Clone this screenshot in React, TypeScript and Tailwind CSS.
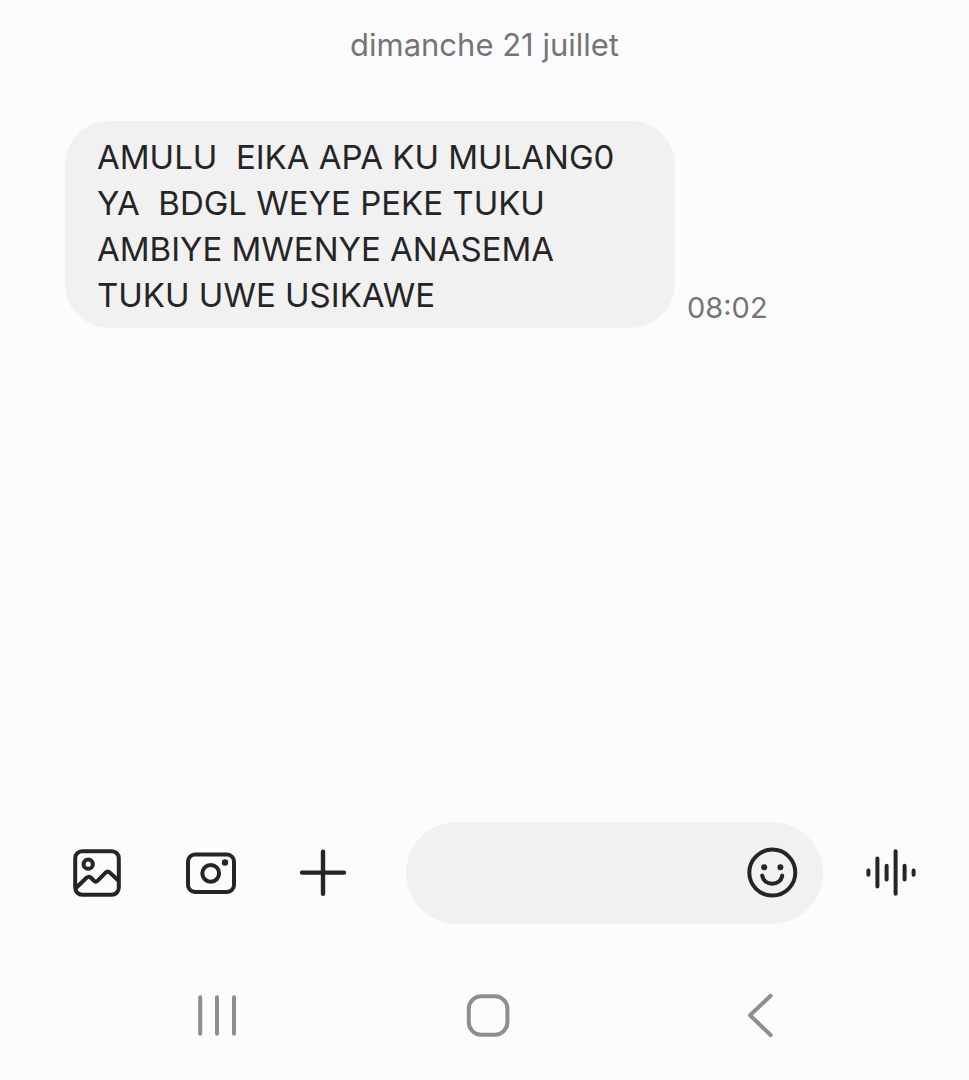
import type { ButtonHTMLAttributes, ReactNode } from 'react';

interface Message {
  id: number;
  text: string;
  time: string;
}

const messages: Message[] = [
  {
    id: 1,
    text: 'AMULU  EIKA APA KU MULANG0\nYA  BDGL WEYE PEKE TUKU\nAMBIYE MWENYE ANASEMA\nTUKU UWE USIKAWE',
    time: '08:02',
  },
];

interface IconButtonProps extends ButtonHTMLAttributes<HTMLButtonElement> {
  label: string;
  children: ReactNode;
}

function IconButton({ label, children, ...props }: IconButtonProps) {
  return (
    <button type="button" aria-label={label} className="size-[52px] shrink-0 cursor-pointer" {...props}>
      <svg
        viewBox="0 0 52 52"
        className="size-full"
        fill="none"
        stroke="currentColor"
        strokeWidth="4"
        strokeLinecap="round"
        strokeLinejoin="round"
        aria-hidden="true"
      >
        {children}
      </svg>
    </button>
  );
}

function MessageBubble({ message }: { message: Message }) {
  return (
    <li className="flex items-end gap-3">
      <p className="w-full max-w-[610px] whitespace-pre-wrap rounded-[44px] bg-[#f1f1f1] px-8 pt-[13px] pb-[10px] text-[33px] leading-[46px] text-[#252525]">
        {message.text}
      </p>
      <time className="text-[29px] leading-10 text-[#757575]">{message.time}</time>
    </li>
  );
}

function Composer() {
  return (
    <form className="flex items-center pr-[52px] pl-[71px] text-[#252525]">
      <div className="mr-[57px] flex gap-[61px]">
        <IconButton label="Galerie">
          <rect x="4.2" y="4.2" width="43.6" height="43.6" rx="7" />
          <circle cx="17.2" cy="17.2" r="4.6" />
          <path d="M5 41 L15.5 30.8 Q18 28.6 20.3 31 L22.8 33.6 Q24.8 35.6 27 33.4 L34.6 25.6 Q36.8 23.6 39 25.7 L47 33.2" />
        </IconButton>
        <IconButton label="Appareil photo">
          <rect x="4" y="7.6" width="46" height="37.4" rx="7" />
          <circle cx="26.7" cy="26.3" r="8.4" />
          <circle cx="41" cy="15.5" r="3.2" fill="currentColor" stroke="none" />
        </IconButton>
        <IconButton label="Ajouter">
          <path d="M5 25.6 H47 M26 4.6 V46.8" strokeWidth="4.4" />
        </IconButton>
      </div>

      <div className="flex h-[102px] min-w-0 flex-1 items-center rounded-full bg-[#f1f1f1] pr-[25px] pl-10">
        <input
          type="text"
          aria-label="Message"
          className="h-full min-w-0 flex-1 bg-transparent text-[33px] outline-none"
        />
        <IconButton label="Emoji">
          <circle cx="26.3" cy="25.6" r="23" />
          <circle cx="18.2" cy="20.3" r="3" fill="currentColor" stroke="none" />
          <circle cx="34.4" cy="20.3" r="3" fill="currentColor" stroke="none" />
          <path d="M16.2 28.6 C18 39.4 34.4 39.4 36.2 28.6" />
        </IconButton>
      </div>

      <div className="ml-[42px] flex">
        <IconButton label="Message vocal">
          <path d="M3.4 23.4 V27.8 M12.4 11.6 V39.6 M21.6 18.8 V32.4 M30.6 4.2 V46.8 M39.6 18.8 V32.4 M48.6 23.4 V27.8" />
        </IconButton>
      </div>
    </form>
  );
}

function SystemNav() {
  return (
    <nav className="mt-[66px] grid grid-cols-3 justify-items-center pr-[73px] pl-[81px] text-[#8e8e8e]">
      <IconButton label="Applications récentes">
        <path d="M9.2 7.2 V43.8 M26 7.2 V43.8 M43 7.2 V43.8" />
      </IconButton>
      <IconButton label="Accueil">
        <rect x="6.8" y="6.2" width="38.6" height="38.6" rx="12.5" />
      </IconButton>
      <IconButton label="Retour">
        <path d="M36.6 5.8 L16 25.2 L36.6 45" />
      </IconButton>
    </nav>
  );
}

export default function App() {
  return (
    <div className="flex min-h-screen flex-col bg-[#fcfcfe] pb-[38px] font-['Inter',sans-serif]">
      <main className="flex-1">
        <h1 className="pt-[25px] text-center text-[31px] leading-10 text-[#757575]">dimanche 21 juillet</h1>
        <ul className="mt-14 px-[65px]">
          {messages.map((message) => (
            <MessageBubble key={message.id} message={message} />
          ))}
        </ul>
      </main>
      <Composer />
      <SystemNav />
    </div>
  );
}
